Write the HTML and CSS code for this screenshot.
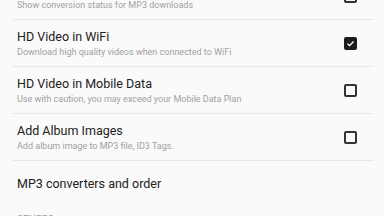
FILE: index.html
```html
<!DOCTYPE html>
<html lang="en">

<head>
  <meta charset="UTF-8">
  <meta name="viewport" content="width=device-width, initial-scale=1.0">
  <title>Settings</title>
  <link rel="stylesheet" href="styles.css">
</head>

<body>
  <div class="list">
    <div class="row first">
      <div class="text">
        <div class="title">Show conversion status</div>
        <div class="summary">Show conversion status for MP3 downloads</div>
      </div>
      <div class="check"></div>
    </div>
    <div class="row">
      <div class="text">
        <div class="title">HD Video in WiFi</div>
        <div class="summary">Download high quality videos when connected to WiFi</div>
      </div>
      <div class="check on">
        <svg viewBox="0 0 12 12" width="9" height="9"><path d="M2 6.2 L4.8 8.8 L10 3.4" fill="none" stroke="#fff" stroke-width="1.8"/></svg>
      </div>
    </div>
    <div class="row">
      <div class="text">
        <div class="title">HD Video in Mobile Data</div>
        <div class="summary">Use with caution, you may exceed your Mobile Data Plan</div>
      </div>
      <div class="check"></div>
    </div>
    <div class="row">
      <div class="text">
        <div class="title">Add Album Images</div>
        <div class="summary">Add album image to MP3 file, ID3 Tags.</div>
      </div>
      <div class="check"></div>
    </div>
    <div class="row single">
      <div class="text">
        <div class="title">MP3 converters and order</div>
      </div>
    </div>
    <div class="header">Others</div>
  </div>
</body>

</html>
```

FILE: styles.css
```css
body {
  margin: 0;
  background-color: #fafafa;
  font-family: Roboto, "Noto Sans", sans-serif;
  overflow: hidden;
}

.list {
  margin: 0 10px 0 12px;
}

.row {
  height: 47px;
  box-sizing: border-box;
  border-bottom: 1px solid #e8e8e8;
  display: flex;
  align-items: center;
  padding: 0 17px 0 5px;
}

.row.first {
  margin-top: -27px;
}

.row.single {
  border-bottom: none;
  align-items: flex-start;
  padding-top: 15px;
}

.text {
  flex: 1;
}

.title {
  font-size: 12.5px;
  line-height: 15px;
  color: #212121;
}

.summary {
  font-size: 9px;
  line-height: 12px;
  margin-top: 2px;
  color: #a0a0a0;
}

.check {
  width: 13px;
  height: 13px;
  box-sizing: border-box;
  border: 2px solid #333;
  border-radius: 2px;
  display: flex;
  align-items: center;
  justify-content: center;
}

.check.on {
  background-color: #1c1c1c;
  border-color: #1c1c1c;
}

.header {
  padding: 6px 0 0 5px;
  font-size: 9px;
  font-weight: 500;
  color: #a8a8a8;
  text-transform: uppercase;
  letter-spacing: 0.5px;
}
```
